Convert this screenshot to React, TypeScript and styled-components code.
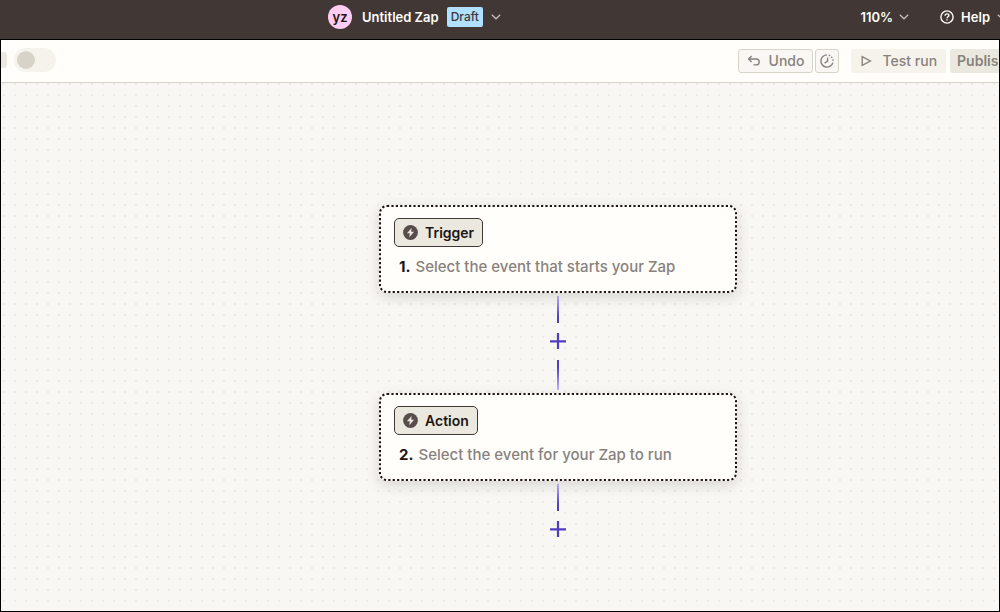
import React from "react";
import styled, { createGlobalStyle } from "styled-components";

const GlobalStyle = createGlobalStyle`
  *, *::before, *::after { box-sizing: border-box; }
  body {
    margin: 0;
    background: #413735;
    color: #201515;
    font-family: Inter, "Liberation Sans", sans-serif;
    font-size: 14px;
    line-height: 20px;
  }
  button { font: inherit; color: inherit; margin: 0; padding: 0; border: 0; background: none; cursor: pointer; }
`;

const Page = styled.div`
  display: flex;
  flex-direction: column;
  min-height: 100vh;
  overflow: hidden;
`;

const Header = styled.header`
  display: flex;
  justify-content: space-between;
  height: 39px;
  padding: 5px 0 10px 328px;
  overflow: hidden;
  color: #fffdf9;
  font-weight: 600;
  font-size: 13px;
`;

const HeaderGroup = styled.div<{ $gap: number; $overhang?: number }>`
  display: flex;
  align-items: center;
  gap: ${(p) => p.$gap}px;
  flex: none;
  margin-right: ${(p) => -(p.$overhang ?? 0)}px;
`;

const Avatar = styled.span`
  display: grid;
  place-items: center;
  width: 24px;
  height: 24px;
  border-radius: 50%;
  background: #ffccf2;
  color: #201515;
`;

const ZapName = styled.h1`
  margin: 0 0 0 2px;
  font-size: 13px;
  font-weight: 600;
`;

const Badge = styled.span`
  padding: 0 4px;
  border-radius: 2px;
  background: #b0e1ff;
  color: #413735;
  font-size: 12px;
  font-weight: 500;
`;

const HeaderButton = styled.button<{ $gap?: number }>`
  display: flex;
  align-items: center;
  gap: ${(p) => p.$gap ?? 7}px;
`;

const Workspace = styled.main`
  display: flex;
  flex-direction: column;
  flex: 1;
  border: 1px solid #000;
  overflow: hidden;
`;

const Toolbar = styled.div`
  display: flex;
  justify-content: space-between;
  align-items: flex-start;
  height: 43px;
  padding-top: 8px;
  border-bottom: 1px solid #d7d3c9;
  background: #fffefa;
  color: #88827e;
  font-weight: 500;
`;

const ToolbarLeft = styled.div`
  display: flex;
  align-items: center;
  gap: 7px;
`;

const PanelHandle = styled.button`
  width: 6px;
  height: 16px;
  border-radius: 0 3px 3px 0;
  background: #ebe9df;
`;

const Toggle = styled.input`
  appearance: none;
  width: 42px;
  height: 24px;
  margin: 0;
  padding: 3px;
  border-radius: 12px;
  background: #f5f3eb;
  &::before {
    content: "";
    display: block;
    width: 18px;
    height: 18px;
    border-radius: 50%;
    background: #d7d3c9;
  }
`;

const ToolbarRight = styled.div`
  display: flex;
  padding-top: 1px;
  margin-right: -15px;
  flex: none;
`;

const ToolButton = styled.button<{ $kind: "outline" | "soft" | "solid" }>`
  display: flex;
  align-items: center;
  gap: 8px;
  height: 24px;
  padding: 0 8px;
  border-radius: 3px;
  border: 1px solid ${(p) => (p.$kind === "outline" ? "#d7d3c9" : "transparent")};
  background: ${(p) => ({ outline: "#f8f7f3", soft: "#f5f3eb", solid: "#ebe9df" })[p.$kind]};
  font-weight: ${(p) => (p.$kind === "solid" ? 600 : 500)};
`;

const UndoButton = styled(ToolButton)`
  margin-right: 2px;
`;

const HistoryButton = styled(ToolButton)`
  justify-content: center;
  width: 24px;
  padding: 0;
  margin-right: 12px;
`;

const TestButton = styled(ToolButton)`
  margin-right: 4px;
`;

const PublishButton = styled(ToolButton)`
  padding: 0 6px;
`;

const Canvas = styled.section`
  display: flex;
  flex-direction: column;
  align-items: center;
  flex: 1;
  padding: 122px 0 24px 116px;
  background-color: #f8f7f3;
  background-image: conic-gradient(from 270deg at 2px 2px, #ecebe7 90deg, transparent 0);
  background-size: 11px 11px;
  background-position: 2px 0;
`;

const StepCard = styled.article`
  position: relative;
  width: 358px;
  height: 88px;
  padding: 13px 15px;
  border-radius: 8px;
  background: #fffefa;
  box-shadow: 0 4px 14px rgba(32, 21, 21, 0.14);
`;

const DottedOutline = styled.svg`
  position: absolute;
  inset: 0;
  width: 100%;
  height: 100%;
  pointer-events: none;
`;

const StepChip = styled.button`
  display: flex;
  align-items: center;
  gap: 7px;
  height: 29px;
  padding: 0 8px;
  border: 1px solid #413735;
  border-radius: 5px;
  background: #ebe9df;
  font-weight: 600;
`;

const StepTitle = styled.p`
  display: flex;
  gap: 5px;
  margin: 10px 0 0 5px;
  color: #88827e;
  font-size: 15px;
  font-weight: 500;
`;

const StepNumber = styled.strong`
  color: #201515;
  font-weight: 700;
`;

const Connector = styled.div`
  display: flex;
  flex-direction: column;
  align-items: center;
  padding: 3px 0;
`;

const Line = styled.span<{ $up?: boolean }>`
  width: 2px;
  height: ${(p) => (p.$up ? 30 : 27)}px;
  background: linear-gradient(${(p) => (p.$up ? "to top" : "to bottom")}, #c2b6ff, #503ebd 75%);
`;

const AddButton = styled.button`
  display: block;
  height: 37px;
  padding: 10px 10px 11px;
  line-height: 0;
`;

const Chevron = () => (
  <svg width="10" height="6" viewBox="0 0 10 6" fill="none" stroke="#c9c3bd" strokeWidth="1.2">
    <path d="M.8.8 5 4.8 9.2.8" />
  </svg>
);

const HelpIcon = () => (
  <svg width="14" height="14" viewBox="0 0 14 14" fill="none" stroke="#fffdf9" strokeWidth="1.4">
    <circle cx="7" cy="7" r="6.1" />
    <path d="M5.1 5.7c0-1.1.8-1.8 1.9-1.8s1.9.7 1.9 1.6c0 1.2-1.9 1.3-1.9 2.7" />
    <path d="M7 9.2v1.4" />
  </svg>
);

const UndoIcon = () => (
  <svg width="14" height="14" viewBox="0 0 14 14" fill="none" stroke="currentColor" strokeWidth="1.4">
    <path d="M4.6 2 1.6 5l3 3M1.8 5h7.4a2.9 2.9 0 0 1 0 5.9H6.4" />
  </svg>
);

const HistoryIcon = () => (
  <svg width="16" height="16" viewBox="0 0 16 16" fill="none" stroke="currentColor" strokeWidth="1.4">
    <path d="M8 1.9a6.1 6.1 0 1 0 5.9 7.7" />
    <path d="M9.8 2.2a6.1 6.1 0 0 1 4.3 6" strokeDasharray="1.5 1.4" />
    <path d="M8.6 4.4V8.2L5.6 10.2" />
  </svg>
);

const PlayIcon = () => (
  <svg width="14" height="14" viewBox="0 0 14 14" fill="none" stroke="currentColor" strokeWidth="1.4">
    <path d="M2.2 2.6v8.8L10.4 7z" />
  </svg>
);

const BoltIcon = () => (
  <svg width="15" height="15" viewBox="0 0 15 15">
    <circle cx="7.5" cy="7.5" r="7.4" fill="#574e4c" />
    <path d="M8.6 2.9 3.9 8.3h2.9l-.5 3.9 4.8-5.5H8.2z" fill="#ebe9df" />
  </svg>
);

const PlusIcon = () => (
  <svg width="16" height="16" viewBox="0 0 16 16" stroke="#503ebd" strokeWidth="2.2">
    <path d="M8 0v16M0 8.4h16" />
  </svg>
);

const steps = [
  { kind: "Trigger", title: "Select the event that starts your Zap" },
  { kind: "Action", title: "Select the event for your Zap to run" },
];

export default function App() {
  return (
    <Page>
      <GlobalStyle />
      <Header>
        <HeaderGroup $gap={8}>
          <Avatar>yz</Avatar>
          <ZapName>Untitled Zap</ZapName>
          <Badge>Draft</Badge>
          <HeaderButton aria-label="Zap menu"><Chevron /></HeaderButton>
        </HeaderGroup>
        <HeaderGroup $gap={31} $overhang={7}>
          <HeaderButton $gap={6}>110% <Chevron /></HeaderButton>
          <HeaderButton><HelpIcon /> Help <Chevron /></HeaderButton>
        </HeaderGroup>
      </Header>
      <Workspace>
        <Toolbar>
          <ToolbarLeft>
            <PanelHandle aria-label="Open panel" />
            <Toggle type="checkbox" role="switch" aria-label="Turn Zap on" />
          </ToolbarLeft>
          <ToolbarRight>
            <UndoButton $kind="outline"><UndoIcon /> Undo</UndoButton>
            <HistoryButton $kind="outline" aria-label="History"><HistoryIcon /></HistoryButton>
            <TestButton $kind="soft"><PlayIcon /> Test run</TestButton>
            <PublishButton $kind="solid">Publish</PublishButton>
          </ToolbarRight>
        </Toolbar>
        <Canvas>
          {steps.map((step, i) => (
            <React.Fragment key={step.kind}>
              <StepCard>
                <DottedOutline aria-hidden="true">
                  <rect
                    x="1"
                    y="1"
                    rx="7"
                    fill="none"
                    stroke="#201515"
                    strokeWidth="2"
                    strokeDasharray="2.2 2.2"
                    style={{ width: "calc(100% - 2px)", height: "calc(100% - 2px)" }}
                  />
                </DottedOutline>
                <StepChip><BoltIcon /> {step.kind}</StepChip>
                <StepTitle><StepNumber>{i + 1}.</StepNumber> {step.title}</StepTitle>
              </StepCard>
              <Connector>
                <Line />
                <AddButton aria-label="Add step"><PlusIcon /></AddButton>
                {i < steps.length - 1 && <Line $up />}
              </Connector>
            </React.Fragment>
          ))}
        </Canvas>
      </Workspace>
    </Page>
  );
}
